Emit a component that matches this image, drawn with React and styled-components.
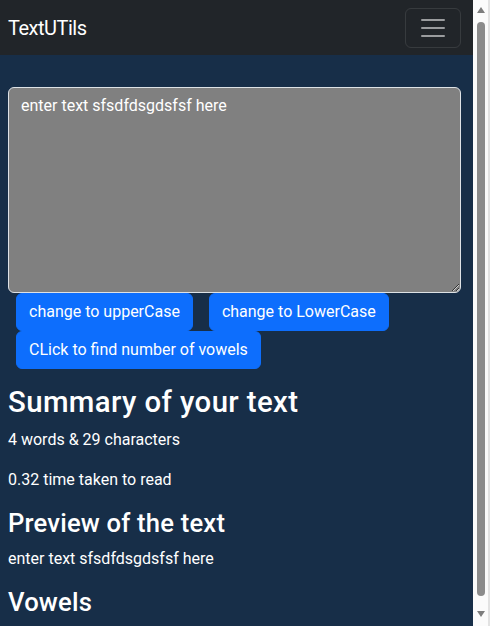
import React, { useState } from "react";
import styled, { createGlobalStyle } from "styled-components";

const GlobalStyle = createGlobalStyle`
  *, *::before, *::after {
    box-sizing: border-box;
  }
  body {
    margin: 0;
    background-color: #172e48;
    color: #ffffff;
    font-family: Roboto, "Noto Sans", sans-serif;
    font-size: 16px;
    line-height: 1.5;
  }
`;

// window: page on the left, the classic scroll track on the right
const Shell = styled.div`
  display: flex;
  height: 100vh;
`;

const Page = styled.div`
  flex: 1;
  min-width: 0;
  overflow-y: auto;
`;

const Track = styled.div`
  flex: 0 0 17px;
  display: flex;
  flex-direction: column;
  align-items: center;
  padding: 7px 0 9px;
  background-color: #fbfbfb;
  border-right: 2px solid #e2e2e2;
`;

const Arrow = styled.div`
  width: 0;
  height: 0;
  border-left: 4.5px solid transparent;
  border-right: 4.5px solid transparent;
  ${(p) =>
    p.$down
      ? "border-top: 6px solid #7d7d7d;"
      : "border-bottom: 6px solid #7d7d7d;"}
`;

const Thumb = styled.div`
  flex: 1;
  width: 8px;
  margin: 9px 0 15px;
  background-color: #8b8b8b;
  border-radius: 4px;
`;

const Navbar = styled.nav`
  height: 55px;
  padding: 0 12px 0 8px;
  display: flex;
  align-items: center;
  justify-content: space-between;
  background-color: #212529;
`;

const Brand = styled.a`
  font-size: 20px;
  line-height: 30px;
  letter-spacing: -0.5px;
  color: #ffffff;
  text-decoration: none;
`;

const Toggler = styled.button`
  width: 56px;
  height: 40px;
  padding: 4px 12px;
  display: flex;
  align-items: center;
  justify-content: center;
  background: transparent;
  border: 1px solid rgba(255, 255, 255, 0.1);
  border-radius: 6px;
  cursor: pointer;
`;

const Container = styled.main`
  padding: 32px 12px 20px 8px;
`;

const TextBox = styled.textarea`
  display: block;
  width: 100%;
  padding: 6px 12px;
  font-family: inherit;
  font-size: 16px;
  line-height: 1.5;
  color: #ffffff;
  background-color: grey;
  border: 1px solid #dee2e6;
  border-radius: 6px;
  outline: none;
`;

const ButtonRow = styled.div`
  display: flex;
  flex-wrap: wrap;
`;

const Button = styled.button`
  margin: 0 8px;
  padding: 6px 12px;
  font-family: inherit;
  font-size: 16px;
  line-height: 24px;
  color: #ffffff;
  background-color: #0d6efd;
  border: 1px solid #0d6efd;
  border-radius: 6px;
  cursor: pointer;
`;

const Title = styled.h1`
  margin: 16px 0 8px;
  font-size: 29.35px;
  font-weight: 500;
  line-height: 1.2;
  letter-spacing: 0.4px;
`;

const SubTitle = styled.h2`
  margin: 0 0 8px;
  font-size: 25.6px;
  font-weight: 500;
  line-height: 1.2;
  letter-spacing: 0.2px;
`;

const Text = styled.p`
  margin: 0 0 16px;
`;

const MenuIcon = () => (
  <svg width="30" height="30" viewBox="0 0 30 30">
    <path
      d="M4 7h22M4 15h22M4 23h22"
      stroke="rgba(255,255,255,0.55)"
      strokeWidth="2"
      strokeLinecap="round"
    />
  </svg>
);

export default function App() {
  const [text, setText] = useState("enter text sfsdfdsgdsfsf here");
  const [vowels, setVowels] = useState(null);

  const words = text.split(/\s+/).filter((w) => w.length > 0).length;

  const countVowels = () => {
    setVowels((text.match(/[aeiou]/gi) || []).length);
  };

  return (
    <Shell>
      <GlobalStyle />
      <Page>
        <Navbar>
          <Brand href="#">TextUTils</Brand>
          <Toggler aria-label="Toggle navigation">
            <MenuIcon />
          </Toggler>
        </Navbar>
        <Container>
          <TextBox rows={8} value={text} onChange={(e) => setText(e.target.value)} />
          <ButtonRow>
            <Button onClick={() => setText(text.toUpperCase())}>change to upperCase</Button>
            <Button onClick={() => setText(text.toLowerCase())}>change to LowerCase</Button>
            <Button onClick={countVowels}>CLick to find number of vowels</Button>
          </ButtonRow>
          <Title>Summary of your text</Title>
          <Text>
            {words} words &amp; {text.length} characters
          </Text>
          <Text>{(0.08 * words).toFixed(2)} time taken to read</Text>
          <SubTitle>Preview of the text</SubTitle>
          <Text>{text}</Text>
          <SubTitle>Vowels</SubTitle>
          {vowels !== null && <Text>{vowels}</Text>}
        </Container>
      </Page>
      <Track aria-hidden="true">
        <Arrow />
        <Thumb />
        <Arrow $down />
      </Track>
    </Shell>
  );
}
